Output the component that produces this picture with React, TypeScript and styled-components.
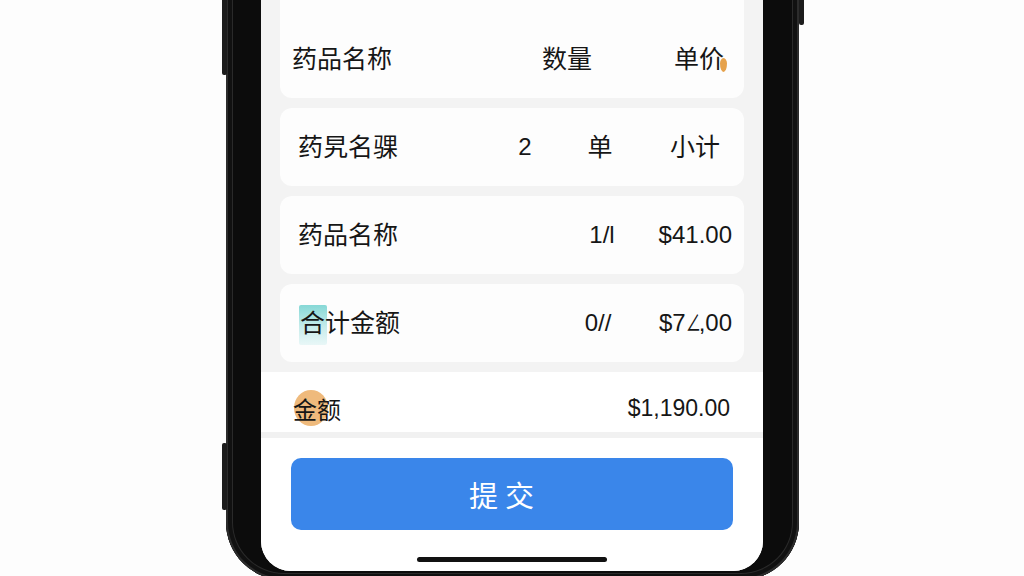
import React from 'react';
import styled, { createGlobalStyle } from 'styled-components';

const GlobalStyle = createGlobalStyle`
  html, body {
    margin: 0;
    padding: 0;
    background: #fdfdfd;
    font-family: "Liberation Sans", "Noto Sans CJK SC", sans-serif;
  }
`;

const Stage = styled.div`
  height: 576px;
  display: flex;
  justify-content: center;
  align-items: flex-end;
  overflow: hidden;
  padding-left: 1px;
`;

/* device body */
const Phone = styled.div`
  position: relative;
  margin-bottom: -4px;
  padding: 0 36px 9px 35px;
  background: #0c0c0c;
  border-radius: 0 0 58px 58px;
  box-shadow: inset 0 0 0 2px #2c2c2c, inset 0 0 0 6px #111, inset 0 0 0 7px #2a2a2a;
`;

const SideButton = styled.div<{ side: 'left' | 'right'; bottom: number; h: number }>`
  position: absolute;
  bottom: ${p => p.bottom}px;
  ${p => (p.side === 'left' ? 'left: -4px;' : 'right: -5px;')}
  width: 5px;
  height: ${p => p.h}px;
  background: #1c1c1c;
  border-radius: 2px;
`;

const Screen = styled.div`
  width: 502px;
  height: 640px;
  display: flex;
  flex-direction: column;
  justify-content: flex-end;
  background: #fff;
  border-radius: 0 0 30px 30px;
  overflow: hidden;
  color: #161616;
`;

const List = styled.div`
  display: flex;
  flex-direction: column;
  gap: 10px;
  padding: 0 19px 10px;
  background: #f3f3f3;
`;

const Card = styled.div<{ cols: string; h?: number; pl?: number; pr?: number }>`
  display: grid;
  grid-template-columns: ${p => p.cols};
  align-items: center;
  height: ${p => p.h ?? 78}px;
  padding: 0 ${p => p.pr ?? 12}px 0 ${p => p.pl ?? 18}px;
  background: #fdfdfd;
  border-radius: 12px;
  font-size: 25px;
  line-height: 1;
`;

const TallCard = styled(Card)`
  align-items: end;
  padding-bottom: 26px;
`;

const Cell = styled.span<{ align?: 'left' | 'center' | 'right' }>`
  position: relative;
  text-align: ${p => p.align ?? 'left'};
  white-space: nowrap;
`;

const Num = styled(Cell)`
  font-size: 24px;
`;

const Glitch = styled.span`
  display: inline-block;
  width: 13px;
  overflow: visible;
  transform: scaleX(0.62);
  transform-origin: left center;
`;

const TealMark = styled.span`
  display: inline-block;
  padding: 6px 2px 9px 1px;
  margin: -6px -2px -9px 1px;
  border-radius: 2px;
  background: linear-gradient(180deg, #86d8d6 0%, #c6eceb 55%, #e9f7f7 100%);
`;

const Drip = styled.span`
  position: absolute;
  right: -3px;
  top: 11px;
  width: 7px;
  height: 14px;
  border-radius: 50% 50% 50% 50% / 40% 40% 60% 60%;
  background: #e6a24c;
`;

const TotalBar = styled.div`
  display: flex;
  align-items: center;
  justify-content: space-between;
  box-sizing: border-box;
  height: 66px;
  padding: 12px 33px 0 32px;
  background: #fff;
  border-bottom: 6px solid #f1f1f1;
  font-size: 23px;
`;

const TotalLabel = styled.span`
  position: relative;
  z-index: 0;
  font-size: 24px;

  &::before {
    content: '';
    position: absolute;
    z-index: -1;
    left: 1px;
    top: -1px;
    width: 34px;
    height: 36px;
    border-radius: 50%;
    background: #efba7c;
  }
`;

const Footer = styled.div`
  display: flex;
  flex-direction: column;
  align-items: center;
  padding: 20px 30px 9px;
  background: #fff;
`;

const SubmitButton = styled.button`
  width: 100%;
  height: 72px;
  padding: 0 14px 0 0;
  border: none;
  border-radius: 10px;
  background: #3a86ea;
  color: #fff;
  font-family: "Noto Sans CJK SC", sans-serif;
  font-size: 29px;
  letter-spacing: 7px;
  cursor: pointer;
`;

const HomeIndicator = styled.div`
  margin-top: 27px;
  width: 190px;
  height: 5px;
  border-radius: 3px;
  background: #111;
`;

const App: React.FC = () => {
  return (
    <>
      <GlobalStyle />
      <Stage>
        <Phone>
          <SideButton side="left" bottom={505} h={150} />
          <SideButton side="left" bottom={70} h={67} />
          <SideButton side="right" bottom={555} h={100} />
          <Screen>
            <List>
              <TallCard cols="1fr 130px 92px" h={120} pl={12} pr={20}>
                <Cell>药品名称</Cell>
                <Cell align="center">数量</Cell>
                <Cell align="right">
                  单价
                  <Drip />
                </Cell>
              </TallCard>
              <Card cols="1fr 60px 90px 75px" pr={24}>
                <Cell>药旯名骒</Cell>
                <Num align="center">2</Num>
                <Cell align="center">单</Cell>
                <Cell align="right">小计</Cell>
              </Card>
              <Card cols="1fr 80px 90px">
                <Cell>药品名称</Cell>
                <Num align="center">1/l</Num>
                <Num align="right">$41.00</Num>
              </Card>
              <Card cols="1fr 80px 94px">
                <Cell>
                  <TealMark>合</TealMark>计金额
                </Cell>
                <Num align="center">0//</Num>
                <Num align="right">
                  $7<Glitch>∠</Glitch>,00
                </Num>
              </Card>
            </List>
            <TotalBar>
              <TotalLabel>金额</TotalLabel>
              <span>$1,190.00</span>
            </TotalBar>
            <Footer>
              <SubmitButton>提交</SubmitButton>
              <HomeIndicator />
            </Footer>
          </Screen>
        </Phone>
      </Stage>
    </>
  );
};

export default App;
